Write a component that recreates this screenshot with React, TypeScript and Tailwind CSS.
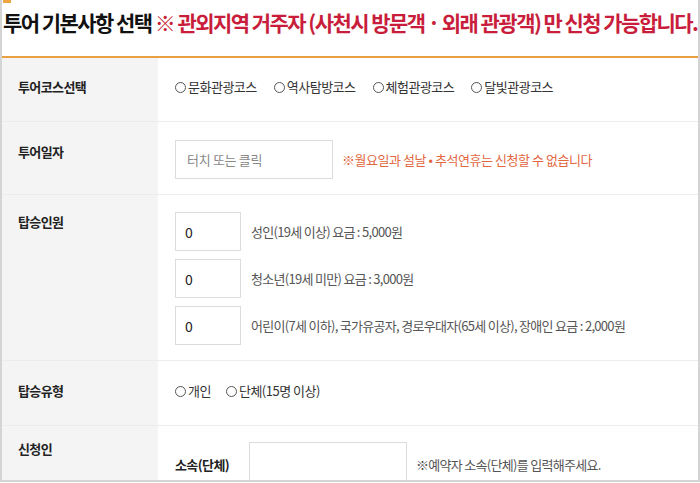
const FONT = "font-['Noto_Sans_CJK_KR','Noto_Sans',sans-serif]"

const COURSES = ['문화관광코스', '역사탐방코스', '체험관광코스', '달빛관광코스']

const FARES = [
  '성인(19세 이상) 요금 : 5,000원',
  '청소년(19세 미만) 요금 : 3,000원',
  '어린이(7세 이하), 국가유공자, 경로우대자(65세 이상), 장애인 요금 : 2,000원',
]

function Radio({ label }: { label: string }) {
  return (
    <label className="flex items-center gap-[1px] text-[13px] tracking-[-0.5px] text-[#333] cursor-pointer">
      <span className="inline-block w-[11px] h-[11px] rounded-full border border-[#555] mr-[1px]" />
      {label}
    </label>
  )
}

function Row({ label, className, labelPad, children }: { label: string; className: string; labelPad: string; children: React.ReactNode }) {
  return (
    <div className={`flex shrink-0 border-b border-[#ececec] ${className}`}>
      <div className={`w-[156px] shrink-0 bg-[#f4f4f4] pl-[16px] ${labelPad}`}>
        <div className="text-[13px] font-bold tracking-[-0.6px] text-[#222] leading-[20px]">{label}</div>
      </div>
      <div className="flex-1 pl-[17px]">{children}</div>
    </div>
  )
}

export default function App() {
  return (
    <div className={`${FONT} w-[700px] h-[483px] overflow-hidden bg-white`}>
      <div className="h-[482px] border-l-2 border-r-2 border-b-2 border-[#d4d4d4] flex flex-col overflow-hidden">
        {/* Header */}
        <div className="h-[56px] shrink-0 relative">
          <div className="absolute left-[1px] top-0 w-[8px] h-[3px] bg-[#f0a640]" />
          <h2 className="pt-[8px] pl-[1px] text-[21px] font-bold tracking-[-1.55px] leading-[28px] whitespace-nowrap text-[#111]">
            투어 기본사항 선택 <span className="text-[#c81e3c]">※ 관외지역 거주자 (사천시 방문객 · 외래 관광객) 만 신청 가능합니다.</span>
          </h2>
        </div>
        <div className="h-[2px] shrink-0 bg-[#e8a040]" />

        {/* 투어코스 */}
        <Row label="투어코스선택" className="h-[64px]" labelPad="pt-[19px]">
          <div className="flex gap-[17px] pt-[19px] leading-[20px]">
            {COURSES.map((c) => (
              <Radio key={c} label={c} />
            ))}
          </div>
        </Row>

        {/* 투어일자 */}
        <Row label="투어일자" className="h-[73px]" labelPad="pt-[20px]">
          <div className="flex items-center gap-[9px] pt-[18px]">
            <input
              readOnly
              placeholder="터치 또는 클릭"
              className="w-[158px] h-[39px] border border-[#dcdcdc] px-[11px] text-[13px] tracking-[-0.3px] placeholder:text-[#888] outline-none"
            />
            <span className="text-[13px] tracking-[-0.45px] text-[#e2673f]">※월요일과 설날 • 추석연휴는 신청할 수 없습니다</span>
          </div>
        </Row>

        {/* 탑승인원 */}
        <Row label="탑승인원" className="h-[166px]" labelPad="pt-[17px]">
          <div className="flex flex-col gap-[8px] pt-[17px]">
            {FARES.map((f) => (
              <div key={f} className="flex items-center gap-[10px]">
                <input
                  readOnly
                  value="0"
                  className="w-[66px] h-[39px] border border-[#dcdcdc] px-[9px] text-[14px] text-[#222] outline-none"
                />
                <span className="text-[13px] tracking-[-0.7px] text-[#555]">{f}</span>
              </div>
            ))}
          </div>
        </Row>

        {/* 탑승유형 */}
        <Row label="탑승유형" className="h-[65px]" labelPad="pt-[20px]">
          <div className="flex gap-[15px] pt-[20px] leading-[20px]">
            <Radio label="개인" />
            <Radio label="단체(15명 이상)" />
          </div>
        </Row>

        {/* 신청인 */}
        <div className="flex flex-1 min-h-0 overflow-hidden">
          <div className="w-[156px] shrink-0 bg-[#f4f4f4] pl-[16px] pt-[13px]">
            <div className="text-[13px] font-bold tracking-[-0.6px] text-[#222] leading-[20px]">신청인</div>
          </div>
          <div className="flex-1 pl-[17px] pt-[16px] flex items-start">
            <span className="text-[13px] font-bold tracking-[-0.6px] text-[#222] leading-[20px] mt-[13px] w-[74px]">소속(단체)</span>
            <input
              readOnly
              className="w-[158px] h-[44px] shrink-0 border border-[#dcdcdc] outline-none"
            />
            <span className="ml-[9px] mt-[13px] text-[13px] tracking-[-0.7px] text-[#555]">※예약자 소속(단체)를 입력해주세요.</span>
          </div>
        </div>
      </div>
    </div>
  )
}
